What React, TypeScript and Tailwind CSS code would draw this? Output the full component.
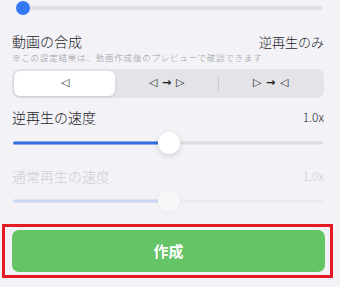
import React from "react";

type SliderProps = {
  value: number;
  height: number;
  thumb: number;
  faded?: boolean;
};

function Slider({ value, height, thumb, faded }: SliderProps) {
  return (
    <div className="relative w-full" style={{ height }}>
      <div
        className={
          "absolute left-[1px] right-[1px] top-1/2 h-[3px] -translate-y-1/2 rounded-full " +
          (faded ? "bg-[#ebebf0]" : "bg-[#dedee3]")
        }
      />
      <div
        className={
          "absolute left-[1px] top-1/2 h-[3px] -translate-y-1/2 rounded-full " +
          (faded ? "bg-[#c9d8f2]" : "bg-[#2f6fe0]")
        }
        style={{ width: `${value * 100}%` }}
      />
      <div
        className={
          "absolute top-1/2 -translate-x-1/2 -translate-y-1/2 rounded-full " +
          (faded
            ? "bg-[#f7f7fa] shadow-[0_1px_4px_rgba(0,0,0,0.05)]"
            : "bg-white shadow-[0_2px_6px_rgba(0,0,0,0.15)]")
        }
        style={{ left: `calc(${value * 100}% + 1px)`, width: thumb, height: thumb }}
      />
    </div>
  );
}

function TopSlider() {
  return (
    <div className="relative h-[16px] w-full">
      <div className="absolute left-[1px] right-[1px] top-1/2 h-[4px] -translate-y-1/2 rounded-full bg-[#dedee3]" />
      <div className="absolute left-[-1px] top-[1px] h-[14px] w-[14px] rounded-full bg-[#3478f6]" />
    </div>
  );
}

function Glyphs({ items }: { items: string[] }) {
  return (
    <div
      className="flex items-center gap-[5px] text-[11px] text-[#1c1c1e]"
      style={{ fontFamily: '"DejaVu Sans", sans-serif' }}
    >
      {items.map((g, i) => (
        <span key={i} className={g === "→" ? "font-semibold" : ""}>
          {g}
        </span>
      ))}
    </div>
  );
}

export default function App() {
  const font = { fontFamily: '"Noto Sans CJK JP", "Noto Sans", sans-serif' };
  return (
    <div className="h-[287px] w-[340px] overflow-hidden bg-[#f2f2f7] font-light" style={font}>
      <div className="px-[12px] pr-[16px]">
        <div className="pl-[5px]">
          <TopSlider />
        </div>

        <div className="mt-[16px] flex h-[19px] items-center justify-between text-[14px] text-[#1c1c1e]">
          <span>動画の合成</span>
          <span className="text-[13px]">逆再生のみ</span>
        </div>
        <div className="flex h-[12px] items-center whitespace-nowrap text-[8.5px] tracking-[0.8px] text-[#9a9aa0]">
          ※この設定結果は、動画作成後のプレビューで確認できます
        </div>

        <div className="mt-[6px] flex h-[29px] items-center rounded-[8px] bg-[#e3e3e8] p-[2px]">
          <div className="flex h-full w-[101px] items-center justify-center rounded-[6px] bg-white shadow-[0_1px_3px_rgba(0,0,0,0.12)]">
            <Glyphs items={["◁"]} />
          </div>
          <div className="flex h-full flex-1 items-center justify-center">
            <Glyphs items={["◁", "→", "▷"]} />
          </div>
          <div className="h-[14px] w-px bg-[#cacace]" />
          <div className="flex h-full flex-1 items-center justify-center">
            <Glyphs items={["▷", "→", "◁"]} />
          </div>
        </div>

        <div className="mt-[9px] flex h-[20px] items-center justify-between text-[14px] text-[#1c1c1e]">
          <span>逆再生の速度</span>
          <span className="text-[12px]">1.0x</span>
        </div>
        <div className="mt-[4px]">
          <Slider value={0.5} height={24} thumb={22} />
        </div>

        <div className="mt-[11px] flex h-[20px] items-center justify-between text-[14px] text-[#cfcfd4]">
          <span>通常再生の速度</span>
          <span className="text-[12px]">1.0x</span>
        </div>
        <div className="mt-[3px]">
          <Slider value={0.5} height={24} thumb={22} faded />
        </div>
      </div>

      <div className="ml-[2px] mt-[11px] w-[331px] border-[3px] border-[#e31c24] py-[3px] pl-[7px] pr-[5px]">
        <button className="flex h-[42px] w-full items-center justify-center rounded-[7px] bg-[#65c466] text-[15px] font-bold text-white">
          作成
        </button>
      </div>
    </div>
  );
}
